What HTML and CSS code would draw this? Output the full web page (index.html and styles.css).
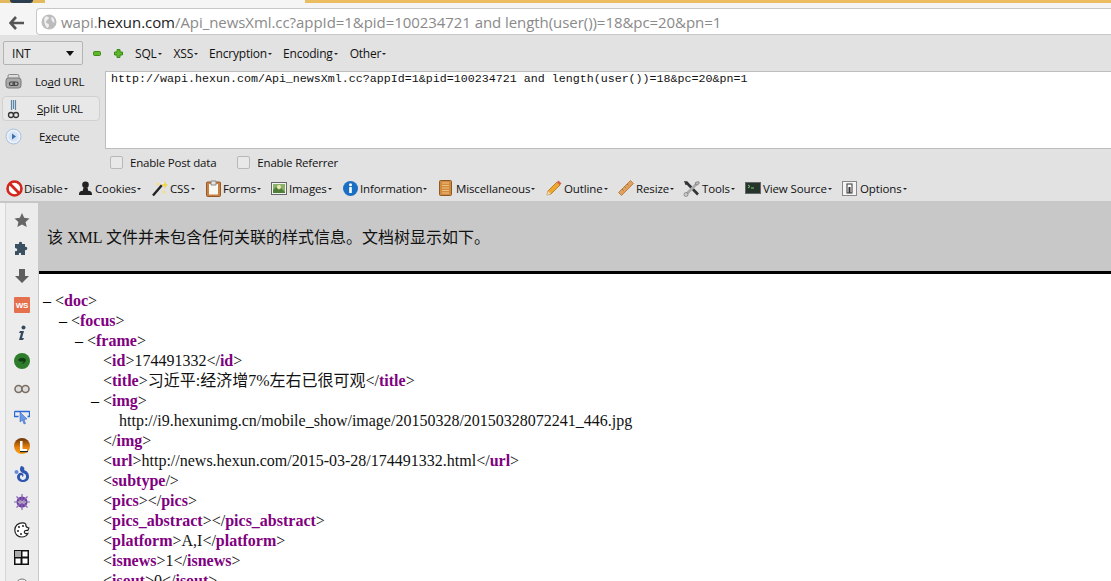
FILE: index.html
```html
<!DOCTYPE html>
<html lang="zh">
<head>
<meta charset="utf-8">
<title>XML</title>
<link rel="stylesheet" href="styles.css">
</head>
<body>
<div class="tabstrip"><div class="tab-left"><i class="tab-blob"></i></div><div class="tab-mid"></div><div class="tab-right"></div></div>
<div class="nav">
  <svg class="back" width="16" height="14" viewBox="0 0 16 14"><path d="M7 1 1.500 7 7 13M2 7h13" fill="none" stroke="#555" stroke-width="2.600"/></svg>
  <div class="url">
    <svg class="globe" width="16" height="16" viewBox="0 0 16 16"><circle cx="8" cy="8" r="7.500" fill="#bcbcbc"/><path d="M4 3c2-1 4 0 4 1S5 6 5 8s3 1 3 3-1 3-2 3C4 12 2 6 4 3zM11 3c2 1 3 4 2 6l-2-2-1-3z" fill="#f0f0f0"/></svg>
    <span class="u-dim u-a">wapi.</span><span class="u-host">hexun.com</span><span class="u-dim u-b">/Api_newsXml.cc?appId=1&amp;pid=100234721 and length(user())=18&amp;pc=20&amp;pn=1</span>
  </div>
</div>
<div class="hackbar">
  <div class="hb-top">
    <div class="select"><span>INT</span><i class="select-arrow"></i></div>
    <svg class="hb-minus" width="8" height="5" viewBox="0 0 8 5"><rect x=".5" y=".5" width="7" height="4" rx="1" fill="#5cb82a" stroke="#3c8a18"/></svg>
    <svg class="hb-plus" width="9" height="9" viewBox="0 0 9 9"><path d="M3 .5h3v2.500h2.500v3H6v2.500H3V6H.5V3H3z" fill="#5cb82a" stroke="#3c8a18"/></svg>
    <span class="menu m-sql">SQL<i class="caret"></i></span>
    <span class="menu m-xss">XSS<i class="caret"></i></span>
    <span class="menu m-enc">Encryption<i class="caret"></i></span>
    <span class="menu m-cod">Encoding<i class="caret"></i></span>
    <span class="menu">Other<i class="caret"></i></span>
  </div>
  <div class="hb-main">
    <div class="hb-side">
      <div class="hb-btn">
        <svg width="17" height="16" viewBox="0 0 17 16"><rect x="3" y="1.500" width="11" height="5" rx="1.500" fill="#ddd" stroke="#888"/><rect x="1" y="5" width="15" height="10" rx="2.500" fill="#aaa" stroke="#777"/><rect x="4.500" y="9" width="5" height="3.500" rx="1.500" fill="none" stroke="#444" stroke-width="1.200"/><rect x="8" y="9" width="5" height="3.500" rx="1.500" fill="none" stroke="#444" stroke-width="1.200"/></svg>
        <span class="t-load">Lo<u>a</u>d URL</span>
      </div>
      <div class="hb-btn hb-active">
        <svg width="17" height="20" viewBox="0 0 17 20"><path d="M6.500 1v10M10.500 1v10M8.500 1v9" stroke="#5a86a8" stroke-width="1.200" fill="none"/><circle cx="6" cy="16" r="2.500" fill="none" stroke="#333" stroke-width="1.300"/><circle cx="11" cy="16" r="2.500" fill="none" stroke="#333" stroke-width="1.300"/></svg>
        <span class="t-split"><u>S</u>plit URL</span>
      </div>
      <div class="hb-btn">
        <svg width="17" height="17" viewBox="0 0 17 17"><circle cx="8.500" cy="8.500" r="7.500" fill="#e8f0fa" stroke="#a9c0dc"/><circle cx="8.500" cy="8.500" r="5" fill="#d4e2f4"/><path d="M7 5.500 11 8.500 7 11.500z" fill="#3a6fb0"/></svg>
        <span class="t-exec">E<u>x</u>ecute</span>
      </div>
    </div>
    <div class="hb-area">
      <div class="textarea">http://wapi.hexun.com/Api_newsXml.cc?appId=1&amp;pid=100234721 and length(user())=18&amp;pc=20&amp;pn=1</div>
      <div class="hb-checks">
        <span class="check"></span><span class="check-label cl-post">Enable Post data</span>
        <span class="check"></span><span class="check-label">Enable Referrer</span>
      </div>
    </div>
  </div>
</div>
<div class="wdbar">
  <span class="wd i-disable"><svg width="17" height="17" viewBox="0 0 17 17"><circle cx="8.500" cy="8.500" r="7" fill="#fff" stroke="#d3261c" stroke-width="2.600"/><path d="M3.800 3.800 13.200 13.200" stroke="#d3261c" stroke-width="2.800"/></svg>Disable<i class="caret"></i></span>
  <span class="wd i-cookies"><svg width="15" height="15" viewBox="0 0 15 15"><circle cx="7.500" cy="3.800" r="3.300" fill="#222"/><path d="M5.500 6.500h4l.7 3.200c2.600.3 3.800 1.300 3.800 3.300v1H1v-1c0-2 1.200-3 3.800-3.300z" fill="#222"/></svg>Cookies<i class="caret"></i></span>
  <span class="wd i-css"><svg width="16" height="17" viewBox="0 0 16 17"><path d="M1 15.500 10 5" stroke="#222" stroke-width="2.400"/><path d="M10 5l1.500-2" stroke="#eee" stroke-width="2.400"/><path d="M13 1l.8 2.800L16 5l-2.200 1.200L13 9l-1-2.800L9 5l3-1.200z" fill="#f2d648"/><circle cx="6" cy="4" r="1.500" fill="#f2e080"/><circle cx="12" cy="12" r="1.500" fill="#f2e080"/></svg>CSS<i class="caret"></i></span>
  <span class="wd i-forms"><svg width="15" height="17" viewBox="0 0 15 17"><rect x=".5" y="2" width="14" height="14.500" rx="1" fill="#c9803f" stroke="#96592a"/><path d="M3 4h9v10.500H3z" fill="#f7f7f4"/><path d="M5 1h5v4H5z" fill="#e4e4e0" stroke="#888"/></svg>Forms<i class="caret"></i></span>
  <span class="wd i-images"><svg width="16" height="13" viewBox="0 0 16 13"><rect x=".5" y=".5" width="15" height="12" fill="#f4f4f0" stroke="#666"/><rect x="2" y="2" width="12" height="9" fill="#8bb26a"/><path d="M2 8l3-3 3 3 2-2 4 4v1H2z" fill="#4f7f3a"/><circle cx="8" cy="5" r="2" fill="#f0e8b0"/></svg>Images<i class="caret"></i></span>
  <span class="wd i-info"><svg width="15" height="15" viewBox="0 0 15 15"><circle cx="7.500" cy="7.500" r="7.500" fill="#1a6fc4"/><circle cx="7.500" cy="3.800" r="1.500" fill="#fff"/><rect x="6.200" y="6" width="2.600" height="6" fill="#fff"/></svg>Information<i class="caret"></i></span>
  <span class="wd i-misc"><svg width="13" height="16" viewBox="0 0 13 16"><rect x=".5" y=".5" width="12" height="15" rx="1" fill="#d08a3c" stroke="#8c5a22"/><path d="M3 3h7M3 5.500h7M3 8h7M3 10.500h7M3 13h7" stroke="#f0c080"/></svg>Miscellaneous<i class="caret"></i></span>
  <span class="wd i-outline"><svg width="16" height="16" viewBox="0 0 16 16"><path d="M1 15l1-4L11 2l3 3-9 9z" fill="#efa72e" stroke="#a8701c" stroke-width=".8"/><path d="M1 15l1-4 3 3z" fill="#f2dcb8"/><path d="M11 2l1.500-1.500 3 3L14 5z" fill="#d9604a"/></svg>Outline<i class="caret"></i></span>
  <span class="wd i-resize"><svg width="16" height="16" viewBox="0 0 16 16"><path d="M.5 12.500 12.500.5l3 3L3.500 15.500z" fill="#e0a060" stroke="#b07530" stroke-width=".8"/><path d="M4 9l1.500 1.500M6.500 6.500 8 8M9 4l1.500 1.500" stroke="#b07530"/></svg>Resize<i class="caret"></i></span>
  <span class="wd i-tools"><svg width="17" height="17" viewBox="0 0 17 17"><path d="M3 2l12 12.500" stroke="#333" stroke-width="2.600"/><path d="M15 2.500 3 14.500" stroke="#aaa" stroke-width="2.600"/><path d="M15.500 1.500l-3 1v2l2 .5 2-2z" fill="#bbb" stroke="#666" stroke-width=".6"/><circle cx="3" cy="14.500" r="2" fill="#ccc" stroke="#666" stroke-width=".6"/><path d="M1 1l3 .5.500 3-2 .5z" fill="#333"/></svg>Tools<i class="caret"></i></span>
  <span class="wd i-source"><svg width="16" height="12" viewBox="0 0 16 12"><rect x=".5" y=".5" width="15" height="11" fill="#26352c" stroke="#666"/><path d="M3 3l2 1.500L3 6M6 6h3" stroke="#7fd07f" fill="none"/></svg>View Source<i class="caret"></i></span>
  <span class="wd i-options"><svg width="15" height="15" viewBox="0 0 15 15"><rect x=".5" y=".5" width="14" height="14" fill="#f4f4f4" stroke="#888"/><rect x="5" y="3" width="5" height="9" fill="#fff" stroke="#333"/><rect x="6.500" y="6" width="2" height="6" fill="#333"/></svg>Options<i class="caret"></i></span>
</div>
<div class="body-row">
  <aside class="sidebar">
    <svg width="16" height="16" viewBox="0 0 16 16"><path d="M8 1l2.200 4.800 5.300.6-3.900 3.500 1.100 5.200L8 12.400 3.300 15.100l1.100-5.200L.5 6.400l5.300-.6z" fill="#666"/></svg>
    <svg width="16" height="16" viewBox="0 0 16 16"><path d="M1 4h4c-1-3 4-3 3 0h3v3c3-1 3 4 0 3v5H7c1-3-3-3-2 0H1v-4c3 1 3-3 0-3z" fill="#3a5060"/></svg>
    <svg width="16" height="16" viewBox="0 0 16 16"><path d="M5 1h6v7h4l-7 7-7-7h4z" fill="#5e5e5e"/></svg>
    <svg class="s-ws" width="16" height="16" viewBox="0 0 16 16"><rect width="16" height="16" rx="1" fill="#e4704e"/><text x="8" y="11" text-anchor="middle" class="ws-text">WS</text></svg>
    <svg width="16" height="16" viewBox="0 0 16 16"><circle cx="9.500" cy="2.500" r="2" fill="#34495a"/><path d="M6 6h4L8 13h2l-1 2H5l2-7H5z" fill="#34495a"/></svg>
    <svg width="16" height="16" viewBox="0 0 16 16"><circle cx="8" cy="8" r="8" fill="#2e7d2c"/><path d="M4 7c2-3 7-3 8 0-1 3-3 4-5 4 2-1 3-2 2-3-1 1-3 1-5-1z" fill="#123d14"/></svg>
    <svg width="16" height="16" viewBox="0 0 16 16"><circle cx="4.500" cy="8" r="3.500" fill="#ddd" stroke="#7a6f62" stroke-width="1.600"/><circle cx="11.500" cy="8" r="3.500" fill="#ddd" stroke="#7a6f62" stroke-width="1.600"/></svg>
    <svg width="16" height="16" viewBox="0 0 16 16"><path d="M.5 2.500h15v5h-2" fill="none" stroke="#2a68d8" stroke-width="1.300"/><path d="M.5 2.500v5h4" fill="none" stroke="#2a68d8" stroke-width="1.300"/><path d="M6 3l7 7-3 .5 1.500 4-1.500.5-1.500-4L6 13z" fill="#6a98e8" stroke="#2a58b8" stroke-width=".5"/></svg>
    <svg width="16" height="16" viewBox="0 0 16 16"><defs><linearGradient id="lg" x1="0" y1="0" x2="0" y2="1"><stop offset="0" stop-color="#6b3208"/><stop offset=".6" stop-color="#e8820c"/><stop offset="1" stop-color="#f8a010"/></linearGradient></defs><circle cx="8" cy="8" r="8" fill="url(#lg)"/><path d="M6 3h2.500v8H13v2H6z" fill="#fff"/><path d="M6 13h8v1.200H6z" fill="#222"/></svg>
    <svg width="16" height="16" viewBox="0 0 16 16"><path d="M7 0c3 0 4 3 3 4 3 1 5 3 5 7 0 3-3 5-6 5s-6-2-6-5 3-5 5-4 2 4 0 4c1-1 0-2-1-2-2 1-1 5 2 5s4-4 2-6C8 7 4 5 7 0z" fill="#2f56b0"/><circle cx="2.500" cy="6" r="2" fill="#6a8ad8"/></svg>
    <svg width="16" height="16" viewBox="0 0 16 16"><circle cx="8" cy="8" r="5.500" fill="#6a3f9c"/><path d="M8 0v16M0 8h16M2.500 2.500l11 11M13.500 2.500l-11 11" stroke="#8c62b8" stroke-width="1.200"/><circle cx="6" cy="8" r="1.600" fill="#eee"/><circle cx="10" cy="8" r="1.600" fill="#eee"/><circle cx="6" cy="8" r=".7" fill="#111"/><circle cx="10" cy="8" r=".7" fill="#111"/></svg>
    <svg width="16" height="16" viewBox="0 0 16 16"><path d="M9 .8C4 .5.800 4 .8 8c0 4.500 3.500 7 7 7 3 0 5-1.500 6-3.500-2 .5-3.500 0-3.500-1.500s2-2 3.500-1.500c.5-1 .7-1.500 1-2.500-2-.5-3-1.500-3-2.500.5-1.500-1-2.500-2.800-2.700z" fill="#fff" stroke="#222" stroke-width="1.200"/><circle cx="5" cy="5" r="1" fill="#222"/><circle cx="9" cy="4" r="1" fill="#222"/><circle cx="4" cy="9" r="1" fill="#222"/><circle cx="7" cy="12" r="1" fill="#222"/></svg>
    <svg width="15" height="15" viewBox="0 0 15 15"><rect width="15" height="15" fill="#111"/><rect x="1" y="1" width="6" height="6" fill="#aaa"/><rect x="8.500" y="8.500" width="5" height="5" fill="#fff"/><rect x="1.500" y="8.500" width="5" height="5" fill="#fff"/><rect x="8.500" y="1.500" width="5" height="5" fill="#fff"/></svg>
    <svg width="16" height="16" viewBox="0 0 16 16"><circle cx="8" cy="8" r="6" fill="#f4f4f4" stroke="#777"/></svg>
  </aside>
  <main class="doc">
    <div class="xml-note"><p>该 XML 文件并未包含任何关联的样式信息。文档树显示如下。</p></div>
    <div class="xml-tree">
      <div class="n">
        <div class="l"><b class="d">–</b>&lt;<b>doc</b>&gt;</div>
        <div class="n">
          <div class="l"><b class="d">–</b>&lt;<b>focus</b>&gt;</div>
          <div class="n">
            <div class="l"><b class="d">–</b>&lt;<b>frame</b>&gt;</div>
            <div class="n">
              <div class="l">&lt;<b>id</b>&gt;174491332&lt;/<b>id</b>&gt;</div>
              <div class="l">&lt;<b>title</b>&gt;习近平:经济增7%左右已很可观&lt;/<b>title</b>&gt;</div>
              <div class="l"><b class="d">–</b>&lt;<b>img</b>&gt;</div>
              <div class="n"><div class="l">http://i9.hexunimg.cn/mobile_show/image/20150328/20150328072241_446.jpg</div></div>
              <div class="l">&lt;/<b>img</b>&gt;</div>
              <div class="l">&lt;<b>url</b>&gt;http://news.hexun.com/2015-03-28/174491332.html&lt;/<b>url</b>&gt;</div>
              <div class="l">&lt;<b>subtype</b>/&gt;</div>
              <div class="l">&lt;<b>pics</b>&gt;&lt;/<b>pics</b>&gt;</div>
              <div class="l">&lt;<b>pics_abstract</b>&gt;&lt;/<b>pics_abstract</b>&gt;</div>
              <div class="l">&lt;<b>platform</b>&gt;A,I&lt;/<b>platform</b>&gt;</div>
              <div class="l">&lt;<b>isnews</b>&gt;1&lt;/<b>isnews</b>&gt;</div>
              <div class="l">&lt;<b>isout</b>&gt;0&lt;/<b>isout</b>&gt;</div>
            </div>
          </div>
        </div>
      </div>
    </div>
  </main>
</div>
</body>
</html>
```
FILE: styles.css
```css
* { box-sizing: border-box; }
html, body { margin: 0; padding: 0; height: 581px; overflow: hidden; background: #fff; }
body { font-family: "Open Sans", "Noto Sans", sans-serif; font-size: 11.5px; letter-spacing: -.2px; color: #111; display: flex; flex-direction: column; }
.tabstrip { display: flex; height: 3px; flex: none; overflow: hidden; }
.tab-left { width: 45px; background: #e4b85c; padding-left: 10px; }
.tab-blob { display: block; width: 23px; height: 3px; background: #2c3e50; border-radius: 0 0 10px 10px; }
.tab-mid { width: 260px; background: #f5f5f5; }
.tab-right { flex: 1; background: #ecbc60; }
.nav { display: flex; align-items: flex-start; height: 32px; flex: none; background: #f5f5f5; padding: 5px 0 0 9px; }
.back { margin: 8px 11px 0 0; }
.url { flex: 1; height: 27px; background: #fff; border: 1px solid #c8c8c8; border-right: 0; border-radius: 4px 0 0 4px; display: flex; align-items: center; padding-left: 4px; font-family: "Open Sans", sans-serif; font-size: 15px; letter-spacing: -.06px; white-space: pre; }
.globe { margin-right: 4px; }
.u-dim { color: #8a8a8a; }
.u-host { color: #222; }
.hackbar { flex: none; background: #e2e2e2; height: 140px; padding: 6px 0 0 3px; }
.hb-top { display: flex; align-items: center; height: 24px; font-size: 12px; }
.select { width: 80px; height: 24px; background: #e6e6e6; border: 1px solid #b4b4b4; border-radius: 2px; display: flex; align-items: center; justify-content: space-between; padding: 0 8px; }
.select-arrow { width: 0; height: 0; border: 4px solid transparent; border-top: 5px solid #111; border-bottom: 0; }
.hb-minus { margin-left: 10px; }
.hb-plus { margin-left: 13px; margin-right: 12px; }
.menu { margin-right: 12px; }
.m-xss { margin-right: 11px; }
.m-enc { margin-right: 11px; }
.m-cod { margin-right: 12px; }
.caret { display: inline-block; width: 0; height: 0; border: 2px solid transparent; border-top: 2.500px solid #222; border-bottom: 0; margin-left: 1px; vertical-align: middle; }
.hb-main { display: flex; margin-top: 6px; }
.hb-side { width: 103px; margin: -4px 0 0 -1px; flex: none; display: flex; flex-direction: column; }
.hb-btn { height: 28px; width: 98px; display: flex; align-items: center; padding-left: 3px; }
.hb-btn span { margin-left: 15px; }
.hb-btn svg { flex: none; }
.hb-btn .t-load { margin-left: 13px; }
.hb-btn .t-exec { margin-left: 17px; }
.hb-active { height: 25px; margin: 1px 0; background: #e8e8e8; border: 1px solid #d0d0d0; border-radius: 4px; padding-left: 2px; }
.hb-area { flex: 1; }
.textarea { height: 78px; background: #fff; border: 1px solid #bdbdbd; border-right: 0; padding: 0 5px; font-family: "Liberation Mono", monospace; font-size: 11.67px; letter-spacing: 0; }
.hb-checks { display: flex; align-items: center; height: 23px; padding: 3px 0 0 5px; }
.check { width: 13px; height: 13px; background: #e8e8e8; border: 1px solid #b8b8b8; border-radius: 2px; }
.check-label { margin-left: 7px; }
.cl-post { margin-right: 21px; }
.wdbar { flex: none; height: 28px; background: #e2e2e2; border-bottom: 2px solid #c6c6c6; display: flex; align-items: center; padding-left: 6px; letter-spacing: -.12px; }
.wd { display: flex; align-items: center; white-space: pre; }
.wd svg { margin-right: 2px; flex: none; }
.wd .caret { margin-top: 1px; }
.i-disable { width: 72px; }
.i-disable svg { margin-right: 1px; }
.i-cookies { width: 74px; }
.i-css { width: 54px; }
.i-forms { width: 65px; }
.i-images { width: 72px; }
.i-info { width: 96px; }
.i-misc { width: 107px; }
.i-misc svg { margin-right: 4px; }
.i-outline { width: 72px; }
.i-resize { width: 65px; }
.i-tools { width: 62px; }
.i-source { width: 97px; }
.i-options svg { margin-right: 3px; }
.body-row { flex: 1; display: flex; min-height: 0; }
.sidebar { width: 39px; flex: none; background: #ececec; border-left: 5px solid #f2f2f2; border-right: 1px solid #c8c8c8; box-shadow: inset 1px 0 0 #d6d6d6; display: flex; flex-direction: column; align-items: center; gap: 12.200px; padding-top: 9px; overflow: hidden; }
.sidebar svg { flex: none; }
.ws-text { font-family: "Liberation Sans", sans-serif; font-size: 8px; font-weight: 700; fill: #fff; }
.doc { flex: 1; min-width: 0; overflow: hidden; font-family: "Liberation Serif", "Noto Sans CJK SC", serif; font-size: 16px; letter-spacing: 0; }
.xml-note { height: 71px; background: #c8c8c8; border-bottom: 3px solid #000; display: flex; align-items: center; padding: 0 0 3px 8px; }
.xml-note p { margin: 0; }
.xml-tree { padding-top: 17px; }
.n { padding-left: 16px; }
.l { height: 20px; line-height: 20px; white-space: pre; }
.l b { color: #800080; }
.l .d { display: inline-block; width: 12px; margin-left: -12px; color: #000; font-weight: 400; }
```
